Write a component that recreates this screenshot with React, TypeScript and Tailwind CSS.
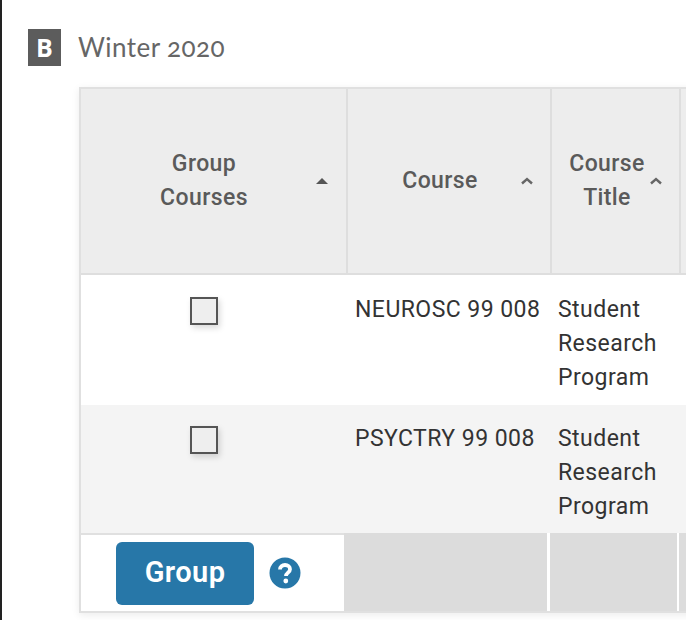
const CELL_TEXT = "font-['Roboto',sans-serif] text-[23px] leading-[34px] tracking-[0.45px] text-[#333]"

function SortCaret({ solid }: { solid?: boolean }) {
  return (
    <svg aria-hidden="true" width="14" height="8" viewBox="0 0 14 8" className="shrink-0">
      {solid ? (
        <path d="M1 7 L7 1 L13 7 Z" fill="#555" />
      ) : (
        <path d="M2 6.5 L7 2 L12 6.5" fill="none" stroke="#666" strokeWidth="2.4" />
      )}
    </svg>
  )
}

function HeaderCell({ children, solid, className }: { children: React.ReactNode; solid?: boolean; className: string }) {
  return (
    <div className={`flex items-center border-r-2 border-[#dedede] font-['Roboto',sans-serif] text-[23px] font-medium leading-[34px] tracking-[0.4px] text-[#5a5a5a] ${className}`}>
      <div className="flex-1 text-center">{children}</div>
      <SortCaret solid={solid} />
    </div>
  )
}

function Checkbox() {
  return <div className="mt-[21px] h-7 w-7 border-2 border-[#555] bg-[#eee] shadow-[2px_3px_6px_rgba(0,0,0,0.15)]" />
}

function CourseRow({ course, className }: { course: string; className: string }) {
  return (
    <div className={`grid grid-cols-[268px_204px_130px_1fr] ${className}`}>
      <div className="flex justify-center pr-[22px]">
        <Checkbox />
      </div>
      <div className={`pl-[6px] pt-[17px] ${CELL_TEXT}`}>{course}</div>
      <div className={`pl-[5px] pt-[17px] ${CELL_TEXT}`}>
        Student
        <br />
        Research
        <br />
        Program
      </div>
      <div />
    </div>
  )
}

export default function App() {
  return (
    <div className="h-[620px] w-[686px] overflow-hidden border-l-2 border-[#222] bg-white pl-[26px] pt-7">
      <div className="flex items-center gap-[17px]">
        <div className="flex h-[37px] w-[33px] items-center justify-center bg-[#5c5c5c] font-['Open_Sans',sans-serif] text-[25px] font-bold text-white">
          B
        </div>
        <h2 className="font-['Lato',sans-serif] text-[26px] tracking-[0.45px] text-[#666] oldstyle-nums">Winter 2020</h2>
      </div>

      <div className="ml-[51px] mt-5 w-[640px] border-2 border-r-0 border-[#e0e0e0] shadow-[0_2px_8px_rgba(0,0,0,0.08)]">
        <div className="grid h-[186px] grid-cols-[267px_204px_129px_1fr] border-b-2 border-[#dedede] bg-[#ededed]">
          <HeaderCell solid className="pl-[12px] pr-[17px]">
            Group
            <br />
            Courses
          </HeaderCell>
          <HeaderCell className="pl-[12px] pr-[16px]">Course</HeaderCell>
          <HeaderCell className="pl-[13px] pr-[16px]">
            Course
            <br />
            Title
          </HeaderCell>
          <div />
        </div>

        <CourseRow course="NEUROSC 99 008" className="h-[130px] bg-white pt-px" />
        <CourseRow course="PSYCTRY 99 008" className="h-[128px] bg-[#f4f4f4]" />

        <div className="grid h-[78px] grid-cols-[263px_203px_3px_127px_2px_1fr] bg-white">
          <div className="flex items-center gap-[15px] border-t-2 border-[#e0e0e0] pl-[35px]">
            <button className="h-[63px] w-[138px] rounded-md bg-[#2777a8] font-['Roboto',sans-serif] text-[29px] font-semibold tracking-[0.4px] text-white">
              Group
            </button>
            <svg aria-hidden="true" width="32" height="32" viewBox="0 0 32 32">
              <circle cx="16" cy="16" r="15.5" fill="#2777a8" />
              <path d="M11 12.5 C11 9.5 13.2 8 16 8 C19 8 21 9.8 21 12.2 C21 15.6 17 15.6 17 19" fill="none" stroke="#fff" strokeWidth="3.8" />
              <circle cx="16.8" cy="24" r="2.4" fill="#fff" />
            </svg>
          </div>
          <div className="bg-[#dcdcdc]" />
          <div />
          <div className="bg-[#dcdcdc]" />
          <div />
          <div className="bg-[#dcdcdc]" />
        </div>
      </div>
    </div>
  )
}
